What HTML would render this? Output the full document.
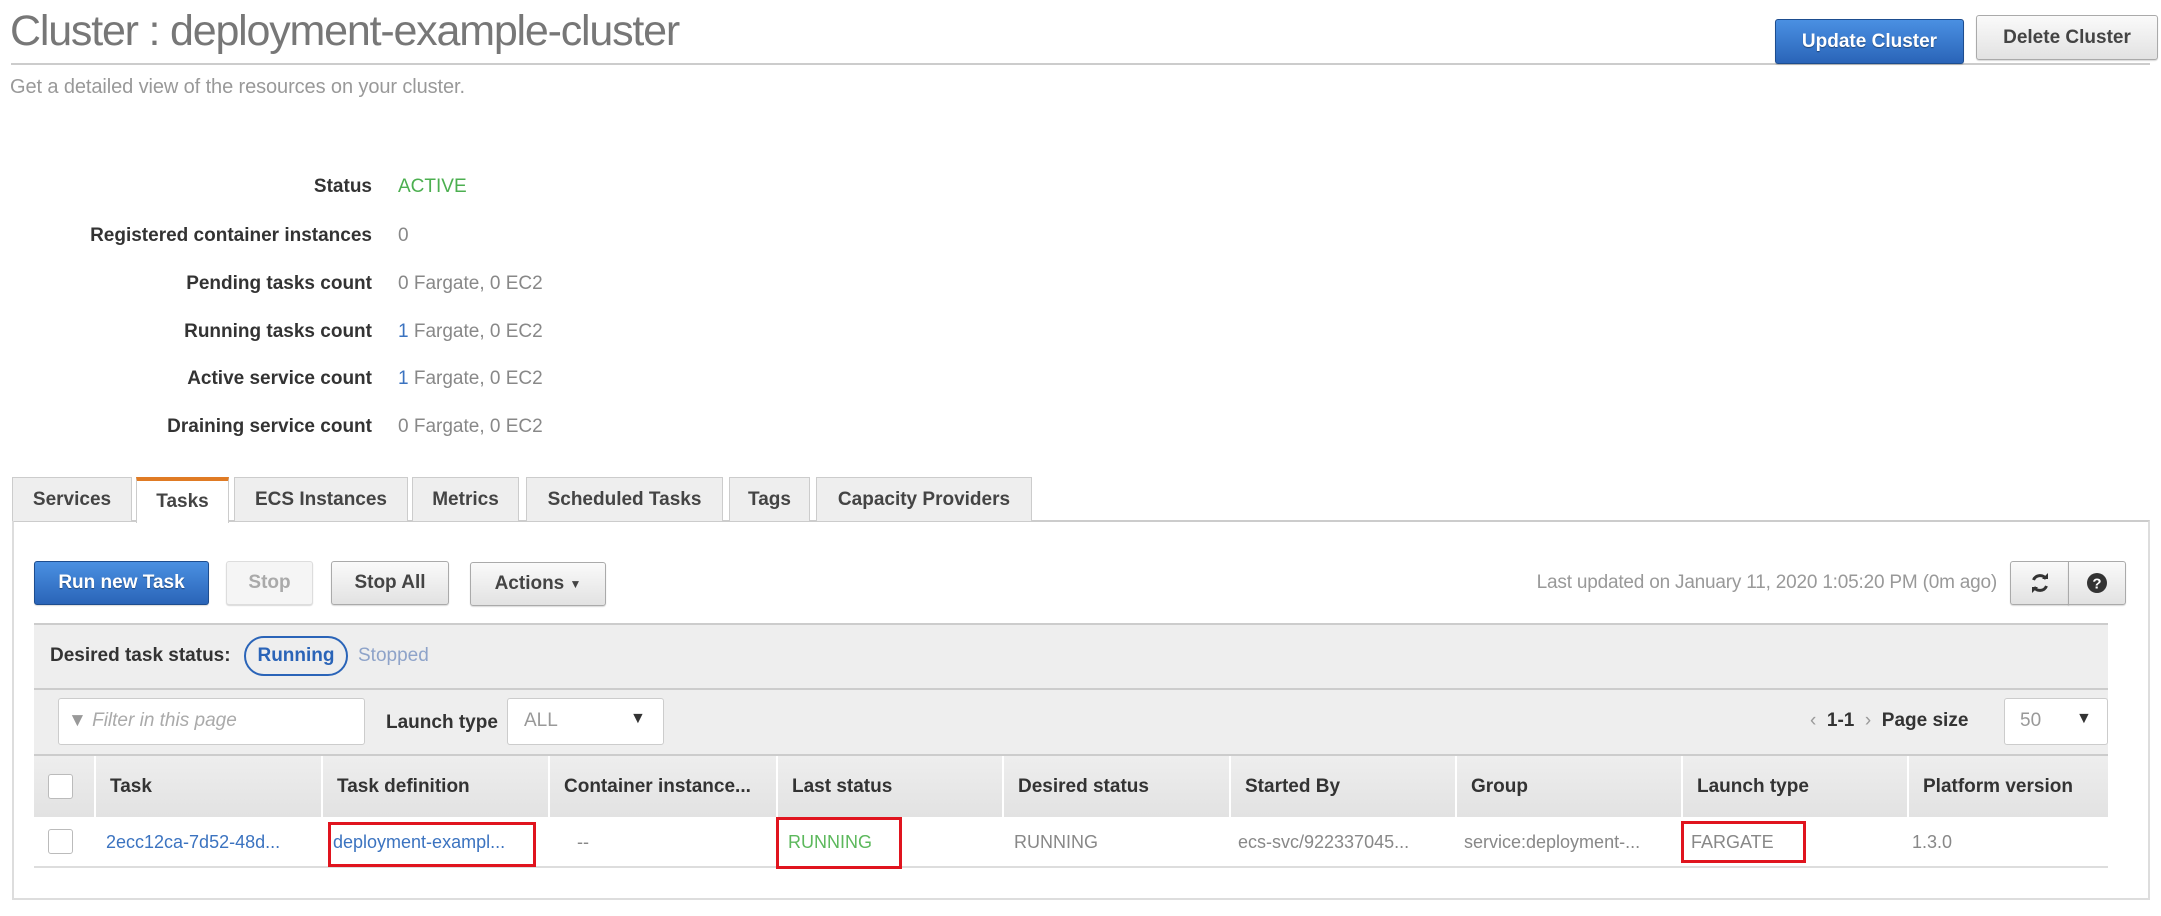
<!DOCTYPE html>
<html><head><style>
*{box-sizing:border-box;margin:0;padding:0}
body{width:2161px;height:916px;background:#fff;font-family:"Liberation Sans",Arial,sans-serif;position:relative;overflow:hidden;color:#444}
.a{position:absolute;white-space:nowrap}
.btn{position:absolute;border:1px solid #aaa;border-radius:3px;background:linear-gradient(#fafafa,#e2e2e2);font-weight:bold;font-size:19px;color:#444;display:flex;align-items:center;justify-content:center;box-shadow:0 1px 1px rgba(0,0,0,.15)}
.blue{background:linear-gradient(#4a90e2,#2a64b8);border-color:#1d4d8f;color:#fff;text-shadow:0 1px 1px rgba(0,0,0,.4)}
.lbl{position:absolute;right:1789px;font-weight:bold;font-size:19px;color:#333;white-space:nowrap}
.val{position:absolute;left:398px;font-size:19px;color:#888;white-space:nowrap}
.tab{position:absolute;top:477px;height:44px;background:#eee;border:1px solid #ccc;border-bottom:none;font-weight:bold;font-size:19px;color:#444;display:flex;align-items:center;justify-content:center}
.th{position:absolute;top:756px;height:61px;font-weight:bold;font-size:19px;color:#333;display:flex;align-items:center;padding-left:14px;border-left:2px solid #fff}
.td{position:absolute;top:817px;height:50px;font-size:18px;color:#888;display:flex;align-items:center;padding-left:12px;white-space:nowrap}
.red{position:absolute;border:3px solid #e0141e}
</style></head><body>
<div class="a" style="left:10px;top:7px;font-size:43px;color:#777;letter-spacing:-1.2px">Cluster : deployment-example-cluster</div>
<div class="a" style="left:11px;top:63px;width:2139px;height:2px;background:#ccc"></div>
<div class="btn blue" style="left:1775px;top:19px;width:189px;height:45px">Update Cluster</div>
<div class="btn" style="left:1976px;top:15px;width:182px;height:45px">Delete Cluster</div>
<div class="a" style="left:10px;top:76px;font-size:20px;color:#999;letter-spacing:-0.1px">Get a detailed view of the resources on your cluster.</div>

<div class="lbl" style="top:176px">Status</div><div class="val" style="top:176px;color:#4caf50">ACTIVE</div>
<div class="lbl" style="top:225px">Registered container instances</div><div class="val" style="top:225px">0</div>
<div class="lbl" style="top:273px">Pending tasks count</div><div class="val" style="top:273px">0 Fargate, 0 EC2</div>
<div class="lbl" style="top:321px">Running tasks count</div><div class="val" style="top:321px"><span style="color:#3b73c0">1</span> Fargate, 0 EC2</div>
<div class="lbl" style="top:368px">Active service count</div><div class="val" style="top:368px"><span style="color:#3b73c0">1</span> Fargate, 0 EC2</div>
<div class="lbl" style="top:416px">Draining service count</div><div class="val" style="top:416px">0 Fargate, 0 EC2</div>

<div class="a" style="left:12px;top:520px;width:2138px;height:380px;border:2px solid #ddd;border-top:2px solid #ccc"></div>
<div class="tab" style="left:12px;width:120px">Services</div>
<div class="tab" style="left:136px;width:93px;background:#fff;height:46px;border-top:4px solid #e07b24">Tasks</div>
<div class="tab" style="left:234px;width:174px">ECS Instances</div>
<div class="tab" style="left:412px;width:107px">Metrics</div>
<div class="tab" style="left:526px;width:197px">Scheduled Tasks</div>
<div class="tab" style="left:729px;width:81px">Tags</div>
<div class="tab" style="left:816px;width:216px">Capacity Providers</div>

<div class="btn blue" style="left:34px;top:561px;width:175px;height:44px">Run new Task</div>
<div class="btn" style="left:226px;top:561px;width:87px;height:44px;color:#aaa;border-color:#ddd;background:#f5f5f5">Stop</div>
<div class="btn" style="left:331px;top:561px;width:118px;height:44px">Stop All</div>
<div class="btn" style="left:470px;top:562px;width:136px;height:44px">Actions&nbsp;<span style="font-size:12px">▼</span></div>
<div class="a" style="right:164px;top:572px;font-size:19px;color:#999;letter-spacing:-0.2px">Last updated on January 11, 2020 1:05:20 PM (0m ago)</div>
<div class="btn" style="left:2010px;top:561px;width:59px;height:44px;border-radius:3px 0 0 3px">
<svg width="20" height="22" viewBox="0 0 20 22"><path d="M16 7A7 7 0 0 0 3.5 8M4 15A7 7 0 0 0 16.5 14" fill="none" stroke="#333" stroke-width="3"/><path d="M12 7h6V1zM8 15H2v6z" fill="#333"/></svg></div>
<div class="btn" style="left:2068px;top:561px;width:58px;height:44px;border-radius:0 3px 3px 0"><svg width="20" height="20" viewBox="0 0 20 20"><circle cx="10" cy="10" r="10" fill="#333"/><text x="10" y="15.5" font-size="15" font-weight="bold" fill="#fff" text-anchor="middle" font-family="Liberation Sans">?</text></svg></div>

<div class="a" style="left:34px;top:623px;width:2074px;height:194px;background:#eee;border-top:2px solid #ccc"></div>
<div class="a" style="left:34px;top:688px;width:2074px;height:2px;background:#ccc"></div>
<div class="a" style="left:50px;top:645px;font-size:19px;font-weight:bold;color:#333">Desired task status:</div>
<div class="a" style="left:244px;top:636px;width:104px;height:40px;border:2px solid #2a64b8;border-radius:20px;font-weight:bold;font-size:19px;color:#2a64b8;display:flex;align-items:center;justify-content:center">Running</div>
<div class="a" style="left:358px;top:645px;font-size:19px;color:#8ea3c9">Stopped</div>

<div class="a" style="left:58px;top:698px;width:307px;height:47px;background:#fff;border:1px solid #ccc;border-radius:3px"></div>
<div class="a" style="left:68px;top:710px;font-size:19px;color:#aaa;font-style:italic"><span style="font-style:normal;color:#999">&#9660;</span> Filter in this page</div>
<div class="a" style="left:386px;top:712px;font-size:19px;font-weight:bold;color:#333">Launch type</div>
<div class="a" style="left:507px;top:698px;width:157px;height:47px;background:#fff;border:1px solid #ccc;border-radius:3px"></div>
<div class="a" style="left:524px;top:710px;font-size:19px;color:#999">ALL</div>
<div class="a" style="left:630px;top:710px;font-size:16px;color:#333">▼</div>
<div class="a" style="left:1810px;top:710px;font-size:19px;font-weight:bold;color:#333"><span style="color:#999;font-weight:normal">‹</span>&nbsp; 1-1 &nbsp;<span style="color:#999;font-weight:normal">›</span>&nbsp; Page size</div>
<div class="a" style="left:2004px;top:698px;width:104px;height:47px;background:#fff;border:1px solid #ccc;border-radius:3px"></div>
<div class="a" style="left:2020px;top:710px;font-size:19px;color:#999">50</div>
<div class="a" style="left:2076px;top:710px;font-size:16px;color:#333">▼</div>

<div class="a" style="left:34px;top:754px;width:2074px;height:63px;background:linear-gradient(#eee,#e2e2e2);border-top:2px solid #ccc"></div>
<div class="a" style="left:48px;top:774px;width:25px;height:25px;background:#fff;border:1px solid #bbb;border-radius:3px"></div>
<div class="th" style="left:94px;width:227px">Task</div>
<div class="th" style="left:321px;width:227px">Task definition</div>
<div class="th" style="left:548px;width:228px">Container instance...</div>
<div class="th" style="left:776px;width:226px">Last status</div>
<div class="th" style="left:1002px;width:227px">Desired status</div>
<div class="th" style="left:1229px;width:226px">Started By</div>
<div class="th" style="left:1455px;width:226px">Group</div>
<div class="th" style="left:1681px;width:226px">Launch type</div>
<div class="th" style="left:1907px;width:201px">Platform version</div>

<div class="a" style="left:48px;top:829px;width:25px;height:25px;background:#fff;border:1px solid #bbb;border-radius:3px"></div>
<div class="td" style="left:94px;color:#3b73c0">2ecc12ca-7d52-48d...</div>
<div class="td" style="left:321px;color:#3b73c0">deployment-exampl...</div>
<div class="td" style="left:565px">--</div>
<div class="td" style="left:776px;color:#5cb85c">RUNNING</div>
<div class="td" style="left:1002px">RUNNING</div>
<div class="td" style="left:1226px">ecs-svc/922337045...</div>
<div class="td" style="left:1452px">service:deployment-...</div>
<div class="td" style="left:1679px">FARGATE</div>
<div class="td" style="left:1900px">1.3.0</div>
<div class="a" style="left:34px;top:866px;width:2074px;height:2px;background:#ddd"></div>

<div class="red" style="left:328px;top:822px;width:208px;height:45px"></div>
<div class="red" style="left:776px;top:817px;width:126px;height:52px"></div>
<div class="red" style="left:1681px;top:821px;width:125px;height:42px"></div>
</body></html>
